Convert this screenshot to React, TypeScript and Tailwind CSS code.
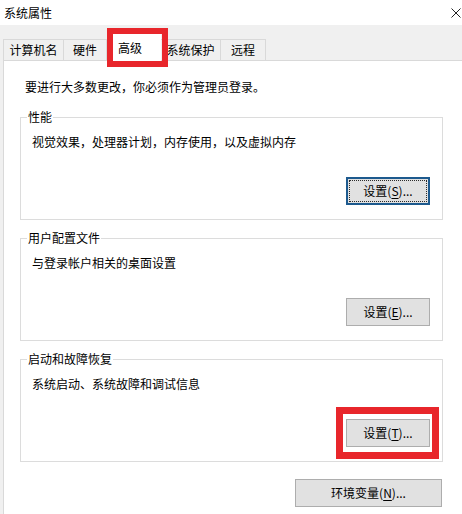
import type { ReactNode } from "react";

const tabs = [
  { name: "计算机名", w: "w-[61px]", active: false },
  { name: "硬件", w: "w-[43px]", active: false },
  { name: "高级", w: "w-[54px]", active: true },
  { name: "系统保护", w: "w-[60px]", active: false },
  { name: "远程", w: "w-[45px]", active: false },
];

function Hotkey({ label, k, w = "w-[84px]", focused = false }: { label: string; k: string; w?: string; focused?: boolean }) {
  return (
    <button
      type="button"
      className={[
        "relative flex h-[28px] items-center justify-center bg-[#e1e1e1] text-[12px] leading-none text-black",
        w,
        focused ? "border-2 border-[#1d5a8e]" : "border border-[#adadad]",
      ].join(" ")}
    >
      {focused && (
        <span aria-hidden className="absolute inset-[1px] border border-dotted border-[#2b2b2b]" />
      )}
      <span>
        {label}(<span className="underline underline-offset-[2px]">{k}</span>)...
      </span>
    </button>
  );
}

function GroupBox({ title, text, children }: { title: string; text: string; children: ReactNode }) {
  return (
    <div className="relative w-[423px] border border-[#dcdcdc] pt-[16px] pb-[14px]">
      <span className="absolute -top-[9px] left-[6px] bg-white px-[1px] text-[12px] leading-[16px]">
        {title}
      </span>
      <p className="pl-[11px] text-[12px] leading-[16px]">{text}</p>
      <div className="mt-[27px] flex justify-end pr-[12px]">{children}</div>
    </div>
  );
}

export default function App() {
  return (
    <div className='relative h-[514px] w-[462px] overflow-hidden bg-[#f0f0f0] font-["Noto_Sans_CJK_SC",sans-serif] text-black'>
      {/* title bar */}
      <div className="flex h-[25px] items-center justify-between bg-white pl-[4px] pr-[1px]">
        <span className="text-[12px] leading-none">系统属性</span>
        <svg viewBox="0 0 10 10" className="h-[10px] w-[10px]" aria-hidden>
          <path d="M0.5 0.5 L9.5 9.5 M9.5 0.5 L0.5 9.5" stroke="#222" strokeWidth="1" fill="none" />
        </svg>
      </div>

      {/* tab strip */}
      <div className="relative flex h-[35px] items-end pl-[3px]">
        {tabs.map((t, i) =>
          t.active ? (
            <div
              key={t.name}
              className={`relative z-10 -mb-px flex h-[27px] items-center bg-white pl-[11px] text-[12px] ${t.w}`}
            >
              {t.name}
            </div>
          ) : (
            <div
              key={t.name}
              className={[
                "flex h-[21px] items-center justify-center border-t border-r border-[#d9d9d9] bg-[#f0f0f0] text-[12px]",
                i === 0 ? "border-l" : "",
                t.w,
              ].join(" ")}
            >
              {t.name}
            </div>
          )
        )}
        {/* highlight around the active tab */}
        <span
          aria-hidden
          className="absolute left-[107px] top-[3px] z-20 h-[39px] w-[61px] border-[6px] border-[#e8262b]"
        />
      </div>

      {/* tab page */}
      <div className="ml-[3px] h-[460px] border-l border-t border-[#d9d9d9] bg-white pl-[16px] pt-[18px]">
        <p className="pl-[5px] text-[12px] leading-[16px]">要进行大多数更改，你必须作为管理员登录。</p>

        <div className="mt-[22px] flex flex-col gap-[18px]">
          <GroupBox title="性能" text="视觉效果，处理器计划，内存使用，以及虚拟内存">
            <Hotkey label="设置" k="S" focused />
          </GroupBox>
          <GroupBox title="用户配置文件" text="与登录帐户相关的桌面设置">
            <Hotkey label="设置" k="E" />
          </GroupBox>
          <GroupBox title="启动和故障恢复" text="系统启动、系统故障和调试信息">
            <div className="relative">
              <Hotkey label="设置" k="T" />
              <span
                aria-hidden
                className="absolute -bottom-[12px] -left-[10px] -right-[9px] -top-[12px] border-[7px] border-[#e8262b]"
              />
            </div>
          </GroupBox>
        </div>

        <div className="mt-[17px] flex w-[423px] justify-end pr-[1px]">
          <Hotkey label="环境变量" k="N" w="w-[147px]" />
        </div>
      </div>
    </div>
  );
}
